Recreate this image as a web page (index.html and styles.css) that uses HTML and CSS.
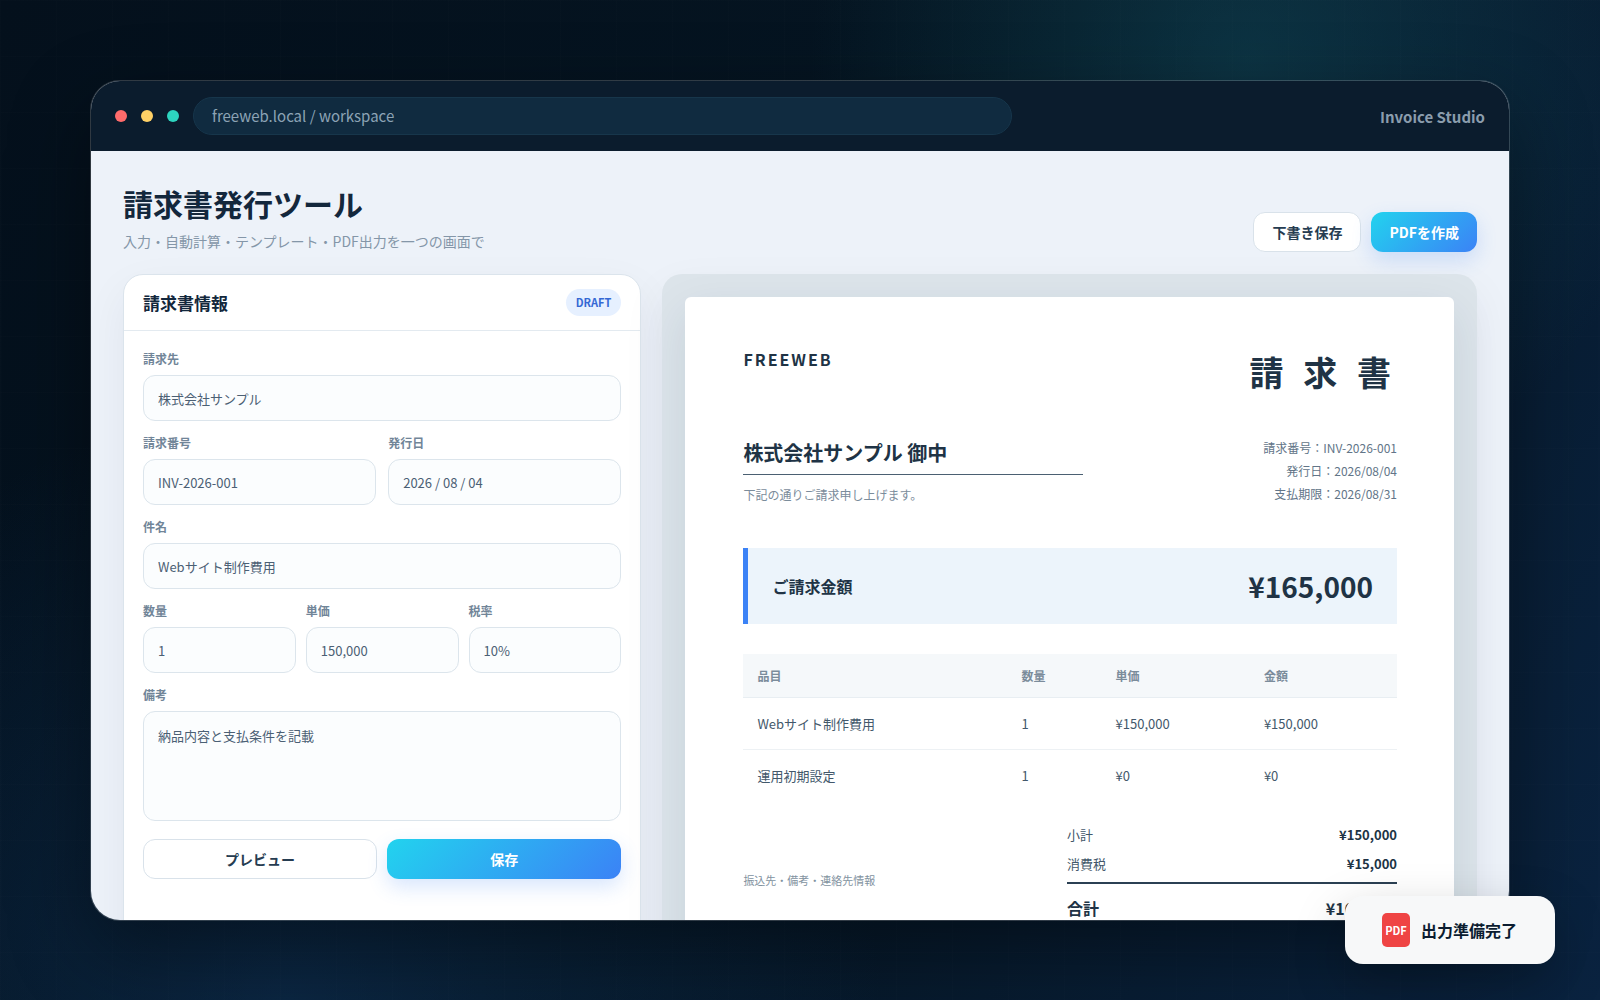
FILE: index.html
```html
<!DOCTYPE html>
<html lang="ja">
<head>
  <meta charset="UTF-8" />
  <meta name="viewport" content="width=device-width, initial-scale=1.0"/>
  <title>請求書発行ツール</title>
  <link rel="stylesheet" href="styles.css">
</head>
<body>
  <div class="stage">
    <main class="window">
      <header class="titlebar">
        <span class="dot red"></span>
        <span class="dot yellow"></span>
        <span class="dot green"></span>
        <div class="address">freeweb.local / workspace</div>
        <div class="app-name">Invoice Studio</div>
      </header>

      <div class="workspace">
        <div class="page-head">
          <div>
            <h1>請求書発行ツール</h1>
            <p>入力・自動計算・テンプレート・PDF出力を一つの画面で</p>
          </div>
          <div class="head-actions">
            <button type="button" class="btn">下書き保存</button>
            <button type="button" class="btn primary">PDFを作成</button>
          </div>
        </div>

        <div class="columns">
          <section class="panel">
            <div class="panel-head">
              <h2>請求書情報</h2>
              <span class="badge">DRAFT</span>
            </div>
            <form class="form">
              <div class="field">
                <label for="client">請求先</label>
                <input type="text" id="client" value="株式会社サンプル">
              </div>
              <div class="row two">
                <div class="field">
                  <label for="number">請求番号</label>
                  <input type="text" id="number" value="INV-2026-001">
                </div>
                <div class="field">
                  <label for="date">発行日</label>
                  <input type="text" id="date" value="2026 / 08 / 04">
                </div>
              </div>
              <div class="field">
                <label for="subject">件名</label>
                <input type="text" id="subject" value="Webサイト制作費用">
              </div>
              <div class="row three">
                <div class="field">
                  <label for="qty">数量</label>
                  <input type="text" id="qty" value="1">
                </div>
                <div class="field">
                  <label for="price">単価</label>
                  <input type="text" id="price" value="150,000">
                </div>
                <div class="field">
                  <label for="tax">税率</label>
                  <input type="text" id="tax" value="10%">
                </div>
              </div>
              <div class="field">
                <label for="notes">備考</label>
                <textarea id="notes">納品内容と支払条件を記載</textarea>
              </div>
              <div class="form-actions">
                <button type="button" class="btn">プレビュー</button>
                <button type="button" class="btn primary">保存</button>
              </div>
            </form>
          </section>

          <section class="preview">
            <article class="paper">
              <div class="paper-top">
                <div class="brand">FREEWEB</div>
                <h2 class="doc-title">請 求 書</h2>
              </div>

              <div class="paper-meta">
                <div class="customer">
                  <h3>株式会社サンプル 御中</h3>
                  <p>下記の通りご請求申し上げます。</p>
                </div>
                <div class="dates">
                  <div>請求番号：INV-2026-001</div>
                  <div>発行日：2026/08/04</div>
                  <div>支払期限：2026/08/31</div>
                </div>
              </div>

              <div class="amount">
                <span>ご請求金額</span>
                <strong>¥165,000</strong>
              </div>

              <table class="items">
                <thead>
                  <tr>
                    <th class="col-item">品目</th>
                    <th class="col-qty">数量</th>
                    <th class="col-price">単価</th>
                    <th>金額</th>
                  </tr>
                </thead>
                <tbody>
                  <tr>
                    <td>Webサイト制作費用</td>
                    <td>1</td>
                    <td>¥150,000</td>
                    <td>¥150,000</td>
                  </tr>
                  <tr>
                    <td>運用初期設定</td>
                    <td>1</td>
                    <td>¥0</td>
                    <td>¥0</td>
                  </tr>
                </tbody>
              </table>

              <div class="paper-bottom">
                <p>振込先・備考・連絡先情報</p>
                <div class="totals">
                  <div class="line"><span>小計</span><strong>¥150,000</strong></div>
                  <div class="line"><span>消費税</span><strong>¥15,000</strong></div>
                  <div class="line grand"><span>合計</span><strong>¥165,000</strong></div>
                </div>
              </div>
            </article>
          </section>
        </div>
      </div>
    </main>

    <div class="toast" role="status">
      <span class="pdf-icon">PDF</span>
      <span>出力準備完了</span>
    </div>
  </div>
</body>
</html>
```
FILE: styles.css
```css
* {
  box-sizing: border-box;
}

body {
  margin: 0;
  font-family: "Noto Sans CJK JP", sans-serif;
  color: #13273c;
  background: #04101c;
}

h1, h2, h3, p {
  margin: 0;
}

button, input, textarea {
  font-family: inherit;
}

.stage {
  position: relative;
  height: 100vh;
  padding: 80px 90px 79px;
  overflow: hidden;
  background:
    repeating-linear-gradient(90deg, rgba(255, 255, 255, 0.006) 0 1px, transparent 1px 56px),
    repeating-linear-gradient(rgba(255, 255, 255, 0.006) 0 1px, transparent 1px 56px),
    radial-gradient(circle at 78% 6%, rgba(20, 85, 100, 0.45), transparent 28%),
    radial-gradient(circle at 18% 100%, rgba(20, 65, 115, 0.4), transparent 36%),
    linear-gradient(120deg, #04101c 0%, #051522 50%, #0a2340 100%);
}

.window {
  display: flex;
  flex-direction: column;
  height: 100%;
  overflow: hidden;
  border: 1px solid rgba(255, 255, 255, 0.18);
  border-radius: 30px;
  background: #edf2f9;
  background-clip: padding-box;
  box-shadow: 0 30px 80px rgba(0, 0, 0, 0.4);
}

/* Browser bar */
.titlebar {
  display: flex;
  align-items: center;
  gap: 14px;
  flex: none;
  height: 70px;
  padding: 0 24px;
  background: #0b1c2d;
}

.dot {
  width: 12px;
  height: 12px;
  border-radius: 50%;
}

.red { background: #ff6b6b; }
.yellow { background: #ffd166; }
.green { background: #2dd4bf; }

.address {
  flex: 0 1 819px;
  height: 38px;
  padding: 0 18px;
  border: 1px solid #17364b;
  border-radius: 19px;
  background: #102b40;
  color: #8ca3b5;
  font-size: 15px;
  line-height: 36px;
}

.app-name {
  margin-left: auto;
  color: #8b9dad;
  font-size: 15px;
  font-weight: 700;
}

/* Workspace */
.workspace {
  flex: 1;
  min-height: 0;
  padding: 32px 32px 0;
  overflow: hidden;
}

.page-head {
  display: flex;
  justify-content: space-between;
  align-items: flex-end;
  margin-bottom: 22px;
}

.page-head h1 {
  margin-bottom: 8px;
  font-size: 30px;
  line-height: 40px;
}

.page-head p {
  padding-bottom: 1px;
  color: #8496a8;
  font-size: 14px;
  line-height: 20px;
}

.head-actions {
  display: flex;
  gap: 10px;
}

.btn {
  height: 40px;
  padding: 0 18px;
  border: 1px solid #d9e2ea;
  border-radius: 12px;
  background: white;
  color: #263c51;
  font-size: 14px;
  font-weight: 700;
  cursor: pointer;
}

.btn.primary {
  border: none;
  background: linear-gradient(135deg, #22d3ee, #3b82f6);
  color: white;
  box-shadow: 0 8px 20px rgba(59, 130, 246, 0.2);
}

.columns {
  display: grid;
  grid-template-columns: 7fr 11fr;
  gap: 21px;
}

.panel {
  border: 1px solid #dbe4ec;
  border-radius: 20px;
  background: white;
  box-shadow: 0 16px 45px rgba(20, 40, 60, 0.06);
}

.panel-head {
  display: flex;
  justify-content: space-between;
  align-items: center;
  height: 56px;
  padding: 0 19px;
  border-bottom: 1px solid #e3eaf0;
}

.panel-head h2 {
  font-size: 17px;
}

.badge {
  padding: 0 10px;
  border-radius: 14px;
  background: #e6f0ff;
  color: #3468d4;
  font-size: 11px;
  font-weight: 700;
  line-height: 27px;
}

.form {
  display: flex;
  flex-direction: column;
  gap: 13px;
  padding: 19px;
}

.row {
  display: grid;
}

.two {
  grid-template-columns: 1fr 1fr;
  gap: 12px;
}

.three {
  grid-template-columns: 1fr 1fr 1fr;
  gap: 10px;
}

.field {
  display: flex;
  flex-direction: column;
  gap: 7px;
  min-width: 0;
}

.field label {
  color: #718598;
  font-size: 12px;
  font-weight: 700;
  line-height: 18px;
}

.field input, .field textarea {
  width: 100%;
  border: 1px solid #dce5ec;
  border-radius: 12px;
  background: #fbfdfe;
  color: #4b6074;
  font-size: 13px;
}

.field input {
  height: 46px;
  padding: 0 14px;
}

.field textarea {
  height: 110px;
  padding: 14px;
  line-height: 20px;
  resize: none;
}

.form-actions {
  display: grid;
  grid-template-columns: 1fr 1fr;
  gap: 10px;
  margin-top: 5px;
}

/* Invoice preview */
.preview {
  padding: 23px;
  border-radius: 20px;
  background: #dce4ea;
  box-shadow: 0 16px 45px rgba(20, 40, 60, 0.06);
}

.paper {
  min-height: 720px;
  padding: 51px 57px 51px 58px;
  border-radius: 6px;
  background: white;
  color: #203345;
  box-shadow: 0 16px 45px rgba(20, 50, 80, 0.1);
}

.paper-top {
  display: flex;
  justify-content: space-between;
}

.brand {
  font-size: 16px;
  font-weight: 700;
  letter-spacing: 2px;
  line-height: 22px;
}

.doc-title {
  font-size: 34px;
  letter-spacing: 6px;
  line-height: 48px;
}

.paper-meta {
  display: flex;
  justify-content: space-between;
  margin-top: 40px;
}

.customer {
  width: 340px;
}

.customer h3 {
  padding: 2px 0 6px;
  border-bottom: 1px solid #4b6072;
  font-size: 20px;
  line-height: 30px;
}

.customer p {
  margin-top: 11px;
  color: #7b8c9b;
  font-size: 12px;
  line-height: 18px;
}

.dates {
  color: #627588;
  font-size: 12px;
  line-height: 23px;
  text-align: right;
}

.amount {
  display: flex;
  justify-content: space-between;
  align-items: center;
  height: 76px;
  margin-top: 43px;
  padding: 0 24px;
  border-left: 5px solid #3b82f6;
  background: #ecf4fb;
}

.amount span {
  font-size: 16px;
  font-weight: 700;
}

.amount strong {
  font-size: 28px;
}

.items {
  width: 100%;
  margin-top: 30px;
  border-collapse: collapse;
  table-layout: fixed;
  text-align: left;
}

.col-item { width: 40.4%; }
.col-qty { width: 14.4%; }
.col-price { width: 22.7%; }

.items th {
  height: 43px;
  padding: 0 14px;
  border-bottom: 1px solid #e8eef2;
  background: #f5f8fa;
  color: #7b8c9b;
  font-size: 12px;
}

.items td {
  height: 52px;
  padding: 0 14px;
  border-bottom: 1px solid #edf1f4;
  color: #43586b;
  font-size: 13px;
}

.items tr:last-child td {
  border-bottom: none;
}

.paper-bottom {
  display: flex;
  justify-content: space-between;
  align-items: center;
  margin-top: 19px;
}

.paper-bottom p {
  padding-top: 16px;
  color: #8292a0;
  font-size: 11px;
}

.totals {
  width: 330px;
  font-size: 13px;
}

.line {
  display: flex;
  justify-content: space-between;
  line-height: 29px;
}

.line span {
  color: #43586b;
}

.grand {
  margin-top: 4px;
  padding-top: 10px;
  border-top: 2px solid #2b4053;
  font-size: 16px;
}

.grand span {
  color: #203345;
  font-weight: 700;
}

/* Export notice */
.toast {
  position: absolute;
  right: 45px;
  bottom: 36px;
  display: flex;
  align-items: center;
  gap: 11px;
  height: 68px;
  padding: 0 38px 0 37px;
  border-radius: 18px;
  background: #f7f8f9;
  color: #0b1c30;
  font-size: 16px;
  font-weight: 700;
  box-shadow: 0 20px 50px rgba(0, 0, 0, 0.25);
}

.pdf-icon {
  width: 28px;
  height: 34px;
  border-radius: 5px;
  background: #ef4444;
  color: white;
  font-size: 11px;
  line-height: 34px;
  text-align: center;
}
```
